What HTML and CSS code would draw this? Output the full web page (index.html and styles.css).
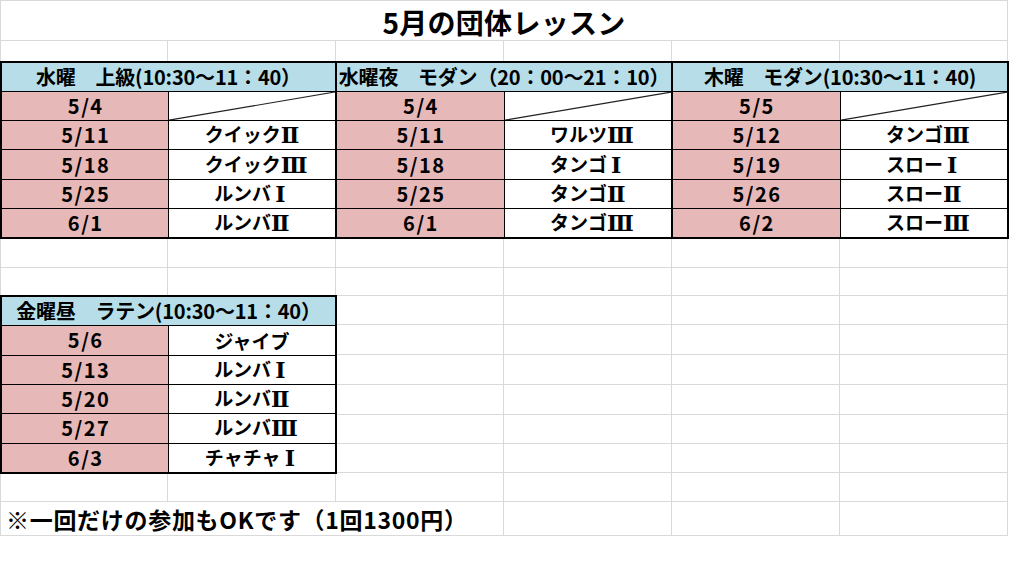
FILE: index.html
```html
<!DOCTYPE html>
<html lang="ja">
<head>
<meta charset="utf-8">
<title>5月の団体レッスン</title>
<link rel="stylesheet" href="styles.css">
</head>
<body>
<div class="sheet">
  <div class="title">5月の団体レッスン</div>

  <div class="tbl t1">
    <div class="hd">水曜　上級(10:30～11：40）</div>
    <div class="d">5/4</div><div class="l"><svg class="diag" viewBox="0 0 100 100" preserveAspectRatio="none"><line x1="0" y1="100" x2="100" y2="0" stroke="#222" stroke-width="1.2" vector-effect="non-scaling-stroke"/></svg></div>
    <div class="d">5/11</div><div class="l"><span>クイック<span class="rn">Ⅱ</span></span></div>
    <div class="d">5/18</div><div class="l"><span>クイック<span class="rn">Ⅲ</span></span></div>
    <div class="d">5/25</div><div class="l"><span>ルンバ<span class="rn">Ⅰ</span></span></div>
    <div class="d">6/1</div><div class="l"><span>ルンバ<span class="rn">Ⅱ</span></span></div>
  </div>

  <div class="tbl t2">
    <div class="hd">水曜夜　モダン（20：00～21：10）</div>
    <div class="d">5/4</div><div class="l"><svg class="diag" viewBox="0 0 100 100" preserveAspectRatio="none"><line x1="0" y1="100" x2="100" y2="0" stroke="#222" stroke-width="1.2" vector-effect="non-scaling-stroke"/></svg></div>
    <div class="d">5/11</div><div class="l"><span>ワルツ<span class="rn">Ⅲ</span></span></div>
    <div class="d">5/18</div><div class="l"><span>タンゴ<span class="rn">Ⅰ</span></span></div>
    <div class="d">5/25</div><div class="l"><span>タンゴ<span class="rn">Ⅱ</span></span></div>
    <div class="d">6/1</div><div class="l"><span>タンゴ<span class="rn">Ⅲ</span></span></div>
  </div>

  <div class="tbl t3">
    <div class="hd">木曜　モダン(10:30～11：40)</div>
    <div class="d">5/5</div><div class="l"><svg class="diag" viewBox="0 0 100 100" preserveAspectRatio="none"><line x1="0" y1="100" x2="100" y2="0" stroke="#222" stroke-width="1.2" vector-effect="non-scaling-stroke"/></svg></div>
    <div class="d">5/12</div><div class="l"><span>タンゴ<span class="rn">Ⅲ</span></span></div>
    <div class="d">5/19</div><div class="l"><span>スロー<span class="rn">Ⅰ</span></span></div>
    <div class="d">5/26</div><div class="l"><span>スロー<span class="rn">Ⅱ</span></span></div>
    <div class="d">6/2</div><div class="l"><span>スロー<span class="rn">Ⅲ</span></span></div>
  </div>

  <div class="tbl t4">
    <div class="hd">金曜昼　ラテン(10:30～11：40）</div>
    <div class="d">5/6</div><div class="l"><span>ジャイブ</span></div>
    <div class="d">5/13</div><div class="l"><span>ルンバ<span class="rn">Ⅰ</span></span></div>
    <div class="d">5/20</div><div class="l"><span>ルンバ<span class="rn">Ⅱ</span></span></div>
    <div class="d">5/27</div><div class="l"><span>ルンバ<span class="rn">Ⅲ</span></span></div>
    <div class="d">6/3</div><div class="l"><span>チャチャ<span class="rn">Ⅰ</span></span></div>
  </div>

  <div class="note">※一回だけの参加もOKです（1回1300円）</div>

  <!-- row 2 -->
  <div class="c"></div><div class="c"></div><div class="c"></div><div class="c"></div><div class="c"></div><div class="c"></div>
  <!-- rows 9-10 -->
  <div class="c"></div><div class="c"></div><div class="c"></div><div class="c"></div><div class="c"></div><div class="c"></div>
  <div class="c"></div><div class="c"></div><div class="c"></div><div class="c"></div><div class="c"></div><div class="c"></div>
  <!-- rows 11-16, columns 3-6 -->
  <div class="c"></div><div class="c"></div><div class="c"></div><div class="c"></div>
  <div class="c"></div><div class="c"></div><div class="c"></div><div class="c"></div>
  <div class="c"></div><div class="c"></div><div class="c"></div><div class="c"></div>
  <div class="c"></div><div class="c"></div><div class="c"></div><div class="c"></div>
  <div class="c"></div><div class="c"></div><div class="c"></div><div class="c"></div>
  <div class="c"></div><div class="c"></div><div class="c"></div><div class="c"></div>
  <!-- row 17 -->
  <div class="c"></div><div class="c"></div><div class="c"></div><div class="c"></div><div class="c"></div><div class="c"></div>
  <!-- row 18, columns 4-6 -->
  <div class="c"></div><div class="c"></div><div class="c"></div>
</div>
</body>
</html>
```

FILE: styles.css
```css
* {
  box-sizing: border-box;
}

html, body {
  margin: 0;
  padding: 0;
  background: #ffffff;
}

body {
  font-family: "Noto Sans CJK JP", "Noto Sans", sans-serif;
  color: #000;
  width: 1024px;
  height: 576px;
  overflow: hidden;
}

.sheet {
  display: grid;
  width: 1008px;
  grid-template-columns: 167px repeat(5, 168px);
  grid-template-rows: 40px 21px 29px 30px 29px 30px 29px 29px 30px 28px 29px 30px 30px 30px 29px 29px 29px 34px;
  border-left: 1px solid #d9d9d9;
  border-top: 1px solid #d9d9d9;
}

.c {
  border-right: 1px solid #d9d9d9;
  border-bottom: 1px solid #d9d9d9;
}

.title {
  grid-column: 1 / -1;
  grid-row: 1;
  border-right: 1px solid #d9d9d9;
  border-bottom: 1px solid #d9d9d9;
  display: flex;
  align-items: center;
  justify-content: center;
  font-size: 28px;
  font-weight: 700;
  line-height: 1;
  letter-spacing: 0.3px;
  padding-top: 2px;
}

.note {
  grid-column: 1 / 4;
  grid-row: 18;
  border-right: 1px solid #d9d9d9;
  border-bottom: 1px solid #d9d9d9;
  display: flex;
  align-items: center;
  padding-left: 5px;
  padding-top: 2px;
  font-size: 23px;
  font-weight: 700;
  line-height: 1;
  letter-spacing: 0.7px;
  white-space: nowrap;
}

.tbl {
  margin: -1px -1px 0 -1px;
  height: calc(100% + 2px);
  border: 2px solid #000;
  background: #000;
  display: grid;
  grid-template-columns: 1fr 1fr;
  grid-template-rows: repeat(6, 1fr);
  gap: 1px;
  z-index: 1;
}

.t1 { grid-column: 1 / 3; grid-row: 3 / 9; }
.t2 { grid-column: 3 / 5; grid-row: 3 / 9; }
.t3 { grid-column: 5 / 7; grid-row: 3 / 9; }
.t4 { grid-column: 1 / 3; grid-row: 11 / 17; }

.hd, .d, .l {
  display: flex;
  align-items: center;
  justify-content: center;
  font-weight: 700;
  line-height: 1;
  white-space: nowrap;
  overflow: hidden;
}

.hd {
  grid-column: 1 / -1;
  background: #b7dee8;
  font-size: 20px;
  letter-spacing: -0.2px;
}

.d {
  background: #e6b8b7;
  font-size: 20px;
  letter-spacing: 1.5px;
  padding-left: 1.5px;
}

.l {
  background: #ffffff;
  font-size: 19px;
}

.rn {
  display: inline-block;
  width: 0.85em;
  text-align: center;
  font-family: "DejaVu Serif", "Liberation Serif", serif;
  font-weight: 700;
  font-size: 22px;
  vertical-align: -1px;
}

.diag {
  display: block;
  flex: 1;
  align-self: stretch;
  width: 100%;
  height: 100%;
}
```
